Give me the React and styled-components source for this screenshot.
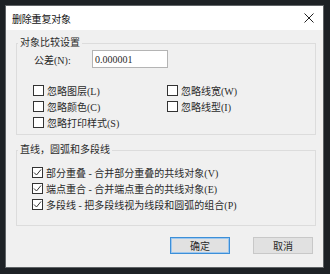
import styled, { createGlobalStyle } from "styled-components";

const GlobalStyle = createGlobalStyle`
  html, body {
    margin: 0;
    padding: 0;
    background: #1d2125;
  }
  body {
    font-family: "Liberation Serif", "Noto Sans CJK SC", serif;
    font-size: 10px;
    color: #2a2a2a;
  }
`;

const Screen = styled.div`
  width: 330px;
  height: 274px;
  padding: 5px 6px 0 5px;
  box-sizing: border-box;
`;

const Dialog = styled.div`
  width: 319px;
  height: 263px;
  box-sizing: border-box;
  border: 1px solid #5f6366;
  background: #f0f0f0;
  display: flex;
  flex-direction: column;
`;

const TitleBar = styled.div`
  height: 24px;
  background: #fff;
  display: flex;
  align-items: center;
  justify-content: space-between;
  padding: 0 9px 0 6px;
`;

const Title = styled.span`
  font-size: 10px;
  color: #111;
  letter-spacing: -0.2px;
`;

const CloseIcon = () => (
  <svg width="10" height="10" viewBox="0 0 10 10">
    <path d="M0.5 0.5 L9.5 9.5 M9.5 0.5 L0.5 9.5" stroke="#222" strokeWidth="1" />
  </svg>
);

const Body = styled.div`
  flex: 1;
  padding: 7px 8px 0 10px;
  display: flex;
  flex-direction: column;
`;

const Group = styled.fieldset`
  margin: 0 0 ${(p) => p.$gap || 0}px;
  padding: 0 0 ${(p) => p.$bottom}px;
  border: 1px solid #dcdcdc;
  width: 300px;
  box-sizing: border-box;
`;

const Legend = styled.legend`
  margin-left: 1px;
  padding: 0 2px;
  line-height: 12px;
  font-size: 10px;
`;

const FieldRow = styled.div`
  display: flex;
  align-items: center;
  height: 18px;
  margin-top: 1px;
  padding-left: 17px;
`;

const FieldLabel = styled.span`
  width: 58px;
`;

const Input = styled.div`
  width: 76px;
  height: 18px;
  box-sizing: border-box;
  border: 1px solid #b4b4b4;
  background: #fff;
  display: flex;
  align-items: center;
  padding-left: 2px;
`;

const CheckGrid = styled.div`
  display: grid;
  grid-template-columns: ${(p) => p.$cols || "1fr"};
  grid-auto-rows: 16px;
  margin-top: ${(p) => p.$top}px;
  padding-left: ${(p) => p.$left}px;
`;

const CheckItem = styled.label`
  display: flex;
  align-items: center;
  gap: 3px;
  white-space: nowrap;
`;

const Box = styled.span`
  width: 11px;
  height: 11px;
  box-sizing: border-box;
  border: 1px solid #333;
  background: #fff;
  display: flex;
  align-items: center;
  justify-content: center;
  flex-shrink: 0;
`;

const Check = ({ checked, label }) => (
  <CheckItem>
    <Box>
      {checked && (
        <svg width="9" height="9" viewBox="0 0 9 9">
          <path d="M1 4.5 L3.5 7 L8 1.5" fill="none" stroke="#333" strokeWidth="1" />
        </svg>
      )}
    </Box>
    {label}
  </CheckItem>
);

const ButtonRow = styled.div`
  display: flex;
  justify-content: flex-end;
  gap: 23px;
  margin-top: 11px;
  padding-right: 2px;
`;

const Button = styled.button`
  width: 60px;
  height: 17px;
  padding: 0;
  box-sizing: border-box;
  font-family: inherit;
  font-size: 10px;
  color: #2a2a2a;
  background: #e1e1e1;
  border: 1px solid ${(p) => (p.$primary ? "#3c8fd8" : "#c8c8c8")};
  box-shadow: ${(p) => (p.$primary ? "inset 0 0 0 1px #9ec7ee" : "none")};
`;

export default function App() {
  return (
    <>
      <GlobalStyle />
      <Screen>
        <Dialog>
          <TitleBar>
            <Title>删除重复对象</Title>
            <CloseIcon />
          </TitleBar>
          <Body>
            <Group $bottom={4} $gap={9}>
              <Legend>对象比较设置</Legend>
              <FieldRow>
                <FieldLabel>公差(N):</FieldLabel>
                <Input>0.000001</Input>
              </FieldRow>
              <CheckGrid $cols="134px 1fr" $top={14} $left={16}>
                <Check label="忽略图层(L)" />
                <Check label="忽略线宽(W)" />
                <Check label="忽略颜色(C)" />
                <Check label="忽略线型(I)" />
                <Check label="忽略打印样式(S)" />
              </CheckGrid>
            </Group>
            <Group $bottom={13}>
              <Legend>直线，圆弧和多段线</Legend>
              <CheckGrid $top={8} $left={15}>
                <Check checked label="部分重叠 - 合并部分重叠的共线对象(V)" />
                <Check checked label="端点重合 - 合并端点重合的共线对象(E)" />
                <Check checked label="多段线 - 把多段线视为线段和圆弧的组合(P)" />
              </CheckGrid>
            </Group>
            <ButtonRow>
              <Button $primary>确定</Button>
              <Button>取消</Button>
            </ButtonRow>
          </Body>
        </Dialog>
      </Screen>
    </>
  );
}
